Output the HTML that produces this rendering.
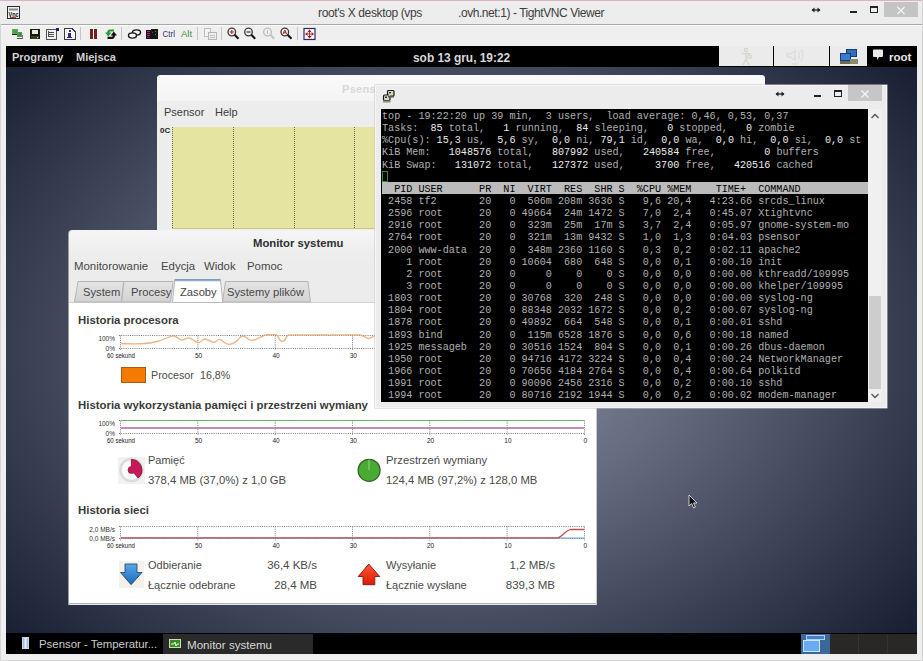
<!DOCTYPE html>
<html><head><meta charset="utf-8">
<style>
*{margin:0;padding:0;box-sizing:border-box}
html,body{width:923px;height:661px;overflow:hidden;background:#efefef;font-family:"Liberation Sans",sans-serif}
.abs{position:absolute}
#title{left:0;top:0;width:923px;height:24px;background:linear-gradient(#efedee,#ececec);border-top:1px solid #d8b4bc}
#title .t{position:absolute;top:5px;font-size:12px;color:#3c3c3c;white-space:pre;letter-spacing:-0.37px}
#toolbar{left:0;top:24px;width:923px;height:22px;background:#efefef;border-top:1px solid #a8a8a8;box-shadow:inset 0 1px 0 #fbfbfb}
#screen{left:6px;top:46px;width:911px;height:608px;overflow:hidden;background:radial-gradient(ellipse 62% 60% at 62% 60%,#5f687b 0%,#474f63 40%,#2c3244 75%,#1d2130 100%)}
#toppanel{left:0;top:0;width:911px;height:21px;background:#000}
#botpanel{left:0;top:587px;width:911px;height:21px;background:#000}
.gn{font-family:"Liberation Sans",sans-serif;white-space:pre;position:absolute}
.term{font-family:"Liberation Mono",monospace;font-size:10.12px;line-height:12px;color:#b0b0b0;white-space:pre;position:absolute}
.term b{color:#ececec;font-weight:normal}
.hdr{background:#bbbbbb;color:#000}
</style></head><body>

<div id="title" class="abs">
<div class="t" style="left:318px">root's X desktop (vps</div>
<div class="t" style="left:458px;letter-spacing:-0.43px">.ovh.net:1) - TightVNC Viewer</div>
<svg class="abs" style="left:6px;top:5px" width="15" height="14"><rect x="1.5" y="0.5" width="12" height="12" fill="#f2f2f2" stroke="#2a2a2a"/><rect x="3" y="2.5" width="9" height="2" fill="#8a8a8a"/><text x="2.5" y="10.5" font-family="Liberation Sans" font-weight="bold" font-size="7" fill="#111" textLength="10" lengthAdjust="spacingAndGlyphs">Vnc</text><rect x="4" y="11" width="6" height="1" fill="#a04050"/></svg>
<svg class="abs" style="left:811px;top:5px" width="10" height="8"><path d="M1 4 H9" stroke="#222" stroke-width="1.3"/><path d="M0.5 4 L3.5 1.5 V6.5 Z M9.5 4 L6.5 1.5 V6.5 Z" fill="#222"/></svg>
<div class="abs" style="left:850px;top:10px;width:7px;height:2px;background:#222"></div>
<div class="abs" style="left:870px;top:5px;width:8px;height:7px;border:1px solid #222;border-top-width:2px"></div>
<div class="abs" style="left:884px;top:1px;width:34px;height:15px;background:#c4c4c4"></div>
<svg class="abs" style="left:896px;top:5px" width="10" height="10"><path d="M1.5 1L8.5 8M8.5 1L1.5 8" stroke="#f8f8f8" stroke-width="1.1"/></svg>
</div>
<div id="toolbar" class="abs"></div>
<svg class="abs" style="left:0;top:0" width="923" height="46" viewBox="0 0 923 46">
<g shape-rendering="crispEdges">
<!-- icon1 green monitors -->
<rect x="12.5" y="29.5" width="5" height="4" fill="#2bb52b" stroke="#7a9a7a" stroke-width="1"/>
<rect x="17.5" y="32.5" width="4" height="4" fill="#22aa22" stroke="#6a8a6a" stroke-width="1"/>
<rect x="12" y="34" width="5" height="1" fill="#222"/>
<rect x="17" y="38" width="6" height="1" fill="#555"/>
<rect x="22" y="35" width="1" height="4" fill="#777"/>
<!-- floppy -->
<rect x="30" y="29" width="10" height="10" fill="#1a1a10"/>
<rect x="32" y="30" width="6" height="4" fill="#e8e8e0"/>
<rect x="31" y="36" width="8" height="3" fill="#3a3a20"/>
<rect x="37" y="37" width="1" height="1" fill="#ccc"/>
<!-- options doc -->
<rect x="46.5" y="29.5" width="10" height="9.5" fill="#f4f4f4" stroke="#505050"/>
<rect x="56" y="28" width="3" height="3" fill="#1c1c6a"/>
<rect x="49" y="32" width="5" height="1" fill="#444"/>
<rect x="49" y="34" width="5" height="1" fill="#555"/>
<rect x="49" y="36" width="5" height="1" fill="#555"/>
<rect x="48" y="31" width="1" height="6" fill="#555"/>
<!-- info doc -->
<path d="M64.5 28.5 H72 L75.5 32 V39.5 H64.5 Z" fill="#f6f6f6" stroke="#3a3a3a"/>
<rect x="69" y="30" width="2" height="2" fill="#2a2a8a"/>
<rect x="68" y="33" width="3" height="4" fill="#2a2a8a"/>
<rect x="67" y="37" width="5" height="1" fill="#2a2a8a"/>
<!-- separators -->
<rect x="80" y="27" width="1" height="13" fill="#c4c4c4"/>
<rect x="121" y="27" width="1" height="13" fill="#c4c4c4"/>
<rect x="197" y="27" width="1" height="13" fill="#c4c4c4"/>
<rect x="221" y="27" width="1" height="13" fill="#c4c4c4"/>
<rect x="297" y="27" width="1" height="13" fill="#c4c4c4"/>
<!-- pause -->
<rect x="90" y="29" width="2.5" height="9.5" fill="#6e2222"/>
<rect x="94" y="29" width="2.5" height="9.5" fill="#6e2222"/>
</g>
<!-- refresh -->
<path d="M114 30.5 H110 Q108.3 30.5 108.3 32.5 V33" stroke="#2a9a2a" stroke-width="2.2" fill="none"/>
<path d="M105 32.5 H111.5 L108.3 36.5 Z" fill="#2a9a2a"/>
<path d="M107.5 37.8 H112 Q113.8 37.8 113.8 35.8 V35" stroke="#111" stroke-width="2.2" fill="none"/>
<path d="M110.6 35.5 H117 L113.8 31.5 Z" fill="#111"/>
<!-- key/chain -->
<ellipse cx="136.5" cy="32.5" rx="4" ry="2.6" fill="#f4f4f4" stroke="#1a1a1a" stroke-width="1.4"/>
<ellipse cx="132.5" cy="35.5" rx="4" ry="2.6" fill="#f4f4f4" stroke="#1a1a1a" stroke-width="1.4"/>
<!-- film -->
<g shape-rendering="crispEdges">
<rect x="146" y="30" width="12" height="9" fill="#161616"/>
<rect x="151" y="29" width="7" height="2" fill="#161616"/>
<rect x="147" y="31" width="3" height="1" fill="#c02090"/>
<rect x="147" y="33" width="3" height="1" fill="#c02090"/>
<rect x="147" y="35" width="3" height="1" fill="#c02090"/>
<rect x="147" y="37" width="3" height="1" fill="#8a1a6a"/>
<rect x="155" y="31" width="1" height="1" fill="#40a040"/>
<rect x="155" y="34" width="1" height="1" fill="#40a040"/>
<rect x="152" y="32" width="1" height="1" fill="#2a6a2a"/>
</g>
<text x="162.5" y="37" font-family="Liberation Sans" font-size="9.6" fill="#35357a" textLength="12.5" lengthAdjust="spacingAndGlyphs">Ctrl</text>
<text x="181" y="37" font-family="Liberation Sans" font-size="9.6" fill="#3b8f3b" textLength="11" lengthAdjust="spacingAndGlyphs">Alt</text>
<!-- copy grayed -->
<g shape-rendering="crispEdges" opacity="0.9">
<rect x="204.5" y="28.5" width="6" height="8" fill="#f4f4f4" stroke="#b8b8b8"/>
<rect x="208.5" y="32.5" width="8" height="7" fill="#ececec" stroke="#b0b0b0"/>
<rect x="210" y="35" width="5" height="1" fill="#c0c0c0"/>
<rect x="210" y="37" width="5" height="1" fill="#c0c0c0"/>
</g>
<!-- zoom icons -->
<g fill="none" stroke-width="1.3">
<circle cx="231.8" cy="32" r="3.8" stroke="#3a3a3a"/>
<path d="M234.6 34.8 L238.5 38.8" stroke="#111" stroke-width="2"/>
<path d="M229.8 32 H233.8 M231.8 30 V34" stroke="#b02020" stroke-width="1.1"/>
<circle cx="248.5" cy="32" r="3.8" stroke="#3a3a3a"/>
<path d="M251.3 34.8 L255.2 38.8" stroke="#111" stroke-width="2"/>
<path d="M246.5 32 H250.5" stroke="#222" stroke-width="1.1"/>
<circle cx="267.5" cy="32" r="3.8" stroke="#bdbdbd"/>
<path d="M270.3 34.8 L274.2 38.8" stroke="#c4c4c4" stroke-width="2"/>
<path d="M267.5 30 V34" stroke="#bbb" stroke-width="1"/>
<circle cx="284.8" cy="32" r="3.8" stroke="#3a3a3a"/>
<path d="M287.6 34.8 L291.5 38.8" stroke="#111" stroke-width="2"/>
<path d="M283 34 L284.8 30 L286.6 34 M283.6 32.8 H286" stroke="#b02020" stroke-width="1"/>
</g>
<!-- fullscreen -->
<rect x="304" y="28.5" width="11" height="11" fill="#fafafa" stroke="#2a2a6a" stroke-width="1.2"/>
<path d="M309.5 29.5 L307.5 32 H311.5 Z M309.5 38.5 L307.5 36 H311.5 Z M305 34 L307.5 32 V36 Z M314 34 L311.5 32 V36 Z" fill="#a01818"/>
<path d="M309.5 32 V36 M307.5 34 H311.5" stroke="#c03030" stroke-width="1"/>
</svg>
<div class="abs" style="left:0;top:24px;width:1px;height:637px;background:#d6d6d6"></div>
<div class="abs" style="left:922px;top:0;width:1px;height:661px;background:#d2d2d2"></div>
<div class="abs" style="left:0;top:660px;width:923px;height:1px;background:#d8d8d8"></div>
<div class="abs" style="left:6px;top:46px;width:911px;height:608px;background:radial-gradient(ellipse 454px 330px at 449px 303px,#8c93a6 0%,#646b7e 50%,#353c4f 100%,#0a0f22 150%)"></div>
<div class="abs" style="left:6px;top:46px;width:911px;height:21px;background:#000"></div>
<div class="gn" style="left:12px;top:51px;font-size:11px;font-weight:bold;color:#d0d0d0">Programy</div>
<div class="gn" style="left:76px;top:51px;font-size:11px;font-weight:bold;color:#d0d0d0">Miejsca</div>
<div class="gn" style="left:413px;top:51px;font-size:11.9px;font-weight:bold;color:#d8d8d8">sob 13 gru, 19:22</div>
<div class="abs" style="left:719px;top:46px;width:54px;height:20px;background:#ebebeb"></div>
<div class="abs" style="left:774px;top:46px;width:55px;height:20px;background:#ebebeb"></div>
<div class="abs" style="left:830px;top:46px;width:37px;height:20px;background:#ebebeb"></div>
<div class="gn" style="left:889px;top:51px;font-size:11.5px;font-weight:bold;color:#e8e8e8">root</div>
<svg class="abs" style="left:872px;top:49px" width="12" height="13"><path d="M1 1.5 Q1 0.5 2 0.5 H10 Q11 0.5 11 1.5 V7 Q11 8 10 8 H7 L5 11 L5 8 H2 Q1 8 1 7 Z" fill="#e8e8e8"/></svg>
<svg class="abs" style="left:719px;top:46px" width="150" height="21">
<g fill="none" stroke="#d4d4cc" stroke-width="1.2"><circle cx="27" cy="4" r="1.6"/><path d="M23 7.5 H31 M27 7 V13 M27 13 L24 19 M27 13 L30 19"/><rect x="29" y="9" width="3" height="3"/></g>
<g fill="none" stroke="#dcdcdc" stroke-width="1.3"><path d="M76 5 V14 L71 11 H68 V8 H71 Z"/><path d="M79 6 Q82 9.5 79 13 M82 4 Q86 9.5 82 15"/><path d="M73 18 H79"/></g>
<rect x="127.5" y="3.5" width="10" height="7" fill="#2f6fc0" stroke="#1a3a70"/><rect x="121.5" y="7.5" width="10" height="7" fill="#3a7ad0" stroke="#1a3a70"/><rect x="121" y="15" width="12" height="3" fill="#6a6a5a"/><rect x="131" y="13" width="8" height="5" fill="#8a8a70"/>
</svg>
<div class="abs" style="left:6px;top:633px;width:911px;height:21px;background:#000"></div>
<div class="abs" style="left:22px;top:637px;width:7px;height:12px;background:linear-gradient(90deg,#8ab0d8,#e8f0ff,#90b8e0);border:1px solid #c8d8e8"></div>
<div class="gn" style="left:39px;top:638px;font-size:11.4px;color:#cccccc">Psensor - Temperatur...</div>
<div class="abs" style="left:163px;top:634px;width:150px;height:20px;background:#2a2a2a"></div>
<div class="abs" style="left:169px;top:639px;width:12px;height:9px;background:#3a8a2a;border:1px solid #c8e0b8"></div>
<svg class="abs" style="left:170px;top:640px" width="10" height="7"><path d="M1 4 H4 L5 2 L6 6 L7 4 H9" stroke="#e0ffd0" stroke-width="1" fill="none"/></svg>
<div class="gn" style="left:187px;top:638px;font-size:11.6px;color:#d8d8d8">Monitor systemu</div>
<div class="abs" style="left:801px;top:634px;width:29px;height:20px;background:#3b6896"></div>
<div class="abs" style="left:806px;top:635px;width:19px;height:5px;border:1px solid #a8d0f8;background:#4a80b8"></div>
<div class="abs" style="left:803px;top:640px;width:17px;height:12px;border:1px solid #c8e4ff;background:#6aaaf0"></div>
<div class="abs" style="left:830px;top:634px;width:87px;height:20px;background:#292826"></div>
<div class="abs" style="left:858px;top:634px;width:1px;height:20px;background:#343330"></div>
<div class="abs" style="left:887px;top:634px;width:1px;height:20px;background:#343330"></div>
<div class="abs" style="left:157px;top:75px;width:608px;height:155px;background:#ededed;border-radius:4px 4px 0 0;overflow:hidden">
<div class="abs" style="left:0;top:0;width:608px;height:26px;background:linear-gradient(#fafafa,#f4f4f4)"></div>
<div class="gn" style="left:185px;top:8px;font-size:11px;font-weight:bold;letter-spacing:0.3px;color:#d8d8d8">Psensor - Temperature Monitor</div>
<div class="gn" style="left:7px;top:31px;font-size:11px;color:#3c3c3c">Psensor</div>
<div class="gn" style="left:58px;top:31px;font-size:11px;color:#3c3c3c">Help</div>
<div class="abs" style="left:15px;top:52px;width:600px;height:102px;background:#e6e4a1;border-bottom:1px solid #c8c68a"></div>
<div class="gn" style="left:3px;top:51px;font-size:8px;font-weight:bold;color:#222">0C</div>
</div>
<svg class="abs" style="left:0;top:0" width="923" height="240"><g stroke="#6e6c50" stroke-width="1" stroke-dasharray="1 1"><line x1="172.5" y1="127" x2="172.5" y2="229" /><line x1="233.5" y1="127" x2="233.5" y2="229" /><line x1="294.5" y1="127" x2="294.5" y2="229" /><line x1="354.5" y1="127" x2="354.5" y2="229" /></g></svg>
<div class="abs" style="left:68px;top:230px;width:529px;height:375px;background:linear-gradient(#f5f5f5,#ececec 30px,#ececec);border-radius:4px 4px 0 0;overflow:hidden;border-left:1px solid #9c9c9c;border-right:1px solid #c8c8c8">
<div class="abs" style="left:0;top:72px;width:529px;height:301px;background:#fff;border-top:1px solid #d0d0d0"></div>
<div class="abs" style="left:0;top:373px;width:529px;height:1px;background:#b4b4b4"></div>
<div class="abs" style="left:0;top:374px;width:529px;height:1px;background:#e6e6e6"></div>
</div>
<div class="gn" style="left:253px;top:237px;font-size:11.3px;font-weight:bold;color:#2e2e2e">Monitor systemu</div>
<div class="gn" style="left:74px;top:260px;font-size:11.4px;color:#464646">Monitorowanie</div>
<div class="gn" style="left:161px;top:260px;font-size:11.4px;color:#464646">Edycja</div>
<div class="gn" style="left:204px;top:260px;font-size:11.4px;color:#464646">Widok</div>
<div class="gn" style="left:247px;top:260px;font-size:11.4px;color:#464646">Pomoc</div>
<svg class="abs" style="left:0;top:0" width="923" height="661">
<defs><linearGradient id="tg" x1="0" y1="0" x2="0" y2="1"><stop offset="0" stop-color="#e4e4e4"/><stop offset="1" stop-color="#d2d2d2"/></linearGradient></defs>
<g stroke="#b4b4b4" stroke-width="1" fill="url(#tg)">
<path d="M74.5 302 L78 281.5 H123.5 L121.5 302 Z"/>
<path d="M121.5 302 L124 281.5 H173 L170.5 302 Z"/>
<path d="M222.5 302 L225.5 281.5 H308 L310.5 302 Z"/>
</g>
<path d="M172.5 302.5 L174.7 279.5 H220.4 L222.9 302.5 Z" fill="#fefefe" stroke="#b8b8b8"/>
<path d="M174.8 280 H220.3" stroke="#5a96d2" stroke-width="1.6"/>
<path d="M175 281.5 H220" stroke="#f0c8a0" stroke-width="0.8" opacity="0.6"/>
</svg>
<div class="gn" style="left:83px;top:286px;font-size:11.2px;color:#464646">System</div>
<div class="gn" style="left:131px;top:286px;font-size:11.2px;color:#464646">Procesy</div>
<div class="gn" style="left:180px;top:286px;font-size:11.2px;color:#464646">Zasoby</div>
<div class="gn" style="left:227px;top:286px;font-size:11.2px;color:#464646">Systemy plików</div>
<div class="gn" style="left:78px;top:314px;font-size:11.4px;font-weight:bold;color:#3a3a3a">Historia procesora</div>
<div class="gn" style="left:78px;top:399px;font-size:11.4px;font-weight:bold;color:#3a3a3a">Historia wykorzystania pamięci i przestrzeni wymiany</div>
<div class="gn" style="left:78px;top:504px;font-size:11.4px;font-weight:bold;color:#3a3a3a">Historia sieci</div>
<svg class="abs" style="left:0;top:0" width="923" height="661">
<g stroke="#444" stroke-width="1" stroke-dasharray="1 1.2" fill="none" opacity="0.7">
<line x1="119" y1="335.5" x2="585" y2="335.5"/><line x1="119" y1="348.5" x2="585" y2="348.5"/>
<line x1="120.5" y1="335.5" x2="120.5" y2="350.5"/>
<line x1="197.8" y1="335.5" x2="197.8" y2="350.5"/>
<line x1="275.2" y1="335.5" x2="275.2" y2="350.5"/>
<line x1="352.5" y1="335.5" x2="352.5" y2="350.5"/>
<line x1="429.8" y1="335.5" x2="429.8" y2="350.5"/>
<line x1="507.1" y1="335.5" x2="507.1" y2="350.5"/>
<line x1="584.5" y1="335.5" x2="584.5" y2="350.5"/>
</g>
<text x="115" y="340.5" text-anchor="end" font-size="6.5" fill="#333" font-family="Liberation Sans">100%</text>
<text x="115" y="351.0" text-anchor="end" font-size="6.5" fill="#333" font-family="Liberation Sans">0%</text>
<text x="107" y="358" font-size="6.5" fill="#222" font-family="Liberation Sans" textLength="28" lengthAdjust="spacingAndGlyphs">60 sekund</text>
<text x="198.6" y="358" text-anchor="middle" font-size="6.5" fill="#222" font-family="Liberation Sans">50</text>
<text x="276.0" y="358" text-anchor="middle" font-size="6.5" fill="#222" font-family="Liberation Sans">40</text>
<text x="353.3" y="358" text-anchor="middle" font-size="6.5" fill="#222" font-family="Liberation Sans">30</text>
<text x="430.6" y="358" text-anchor="middle" font-size="6.5" fill="#222" font-family="Liberation Sans">20</text>
<text x="507.9" y="358" text-anchor="middle" font-size="6.5" fill="#222" font-family="Liberation Sans">10</text>
<text x="585.3" y="358" text-anchor="middle" font-size="6.5" fill="#222" font-family="Liberation Sans">0</text>
<path d="M121 343.5 C132 344.3 142 344 150 343 C158 342 165 339 168 337.5 C170 336.5 172 335.5 174 336 C177 336 179 340.5 182 340 C185 339.5 187 337.5 189.5 338 C193 339 195 342.5 198.5 342.7 C201 342.5 202 339 205 338.8 C208 338.8 211 342.4 214 342.4 C216 342.4 217 339.4 219.5 339.4 C222 339.4 224 344.3 228.5 344.3 C233 344.3 236 342 238 340 C240 337 241.5 336 243 336 C246 336 248 340.4 252 340.4 C255 340.4 257 338.5 260 337.5 C263 336.5 264 334.7 267 334.7 H276 C278 334.7 279 341.4 282.5 341.4 C286 341.4 286 334.8 289 334.8 H328 C329 335.5 330 335.5 331 334.8 H360 C363 335 365 338.4 369 338.4 C372 338.4 374 335 376 335" stroke="#eaa46a" stroke-width="1.3" fill="none" opacity="0.85"/>
<g stroke="#444" stroke-width="1" stroke-dasharray="1 1.2" fill="none" opacity="0.7">
<line x1="119" y1="420.5" x2="585" y2="420.5"/><line x1="119" y1="433.5" x2="585" y2="433.5"/>
<line x1="120.5" y1="420.5" x2="120.5" y2="435.5"/>
<line x1="197.8" y1="420.5" x2="197.8" y2="435.5"/>
<line x1="275.2" y1="420.5" x2="275.2" y2="435.5"/>
<line x1="352.5" y1="420.5" x2="352.5" y2="435.5"/>
<line x1="429.8" y1="420.5" x2="429.8" y2="435.5"/>
<line x1="507.1" y1="420.5" x2="507.1" y2="435.5"/>
<line x1="584.5" y1="420.5" x2="584.5" y2="435.5"/>
</g>
<text x="115" y="425.5" text-anchor="end" font-size="6.5" fill="#333" font-family="Liberation Sans">100%</text>
<text x="115" y="436.0" text-anchor="end" font-size="6.5" fill="#333" font-family="Liberation Sans">0%</text>
<text x="107" y="443" font-size="6.5" fill="#222" font-family="Liberation Sans" textLength="28" lengthAdjust="spacingAndGlyphs">60 sekund</text>
<text x="198.6" y="443" text-anchor="middle" font-size="6.5" fill="#222" font-family="Liberation Sans">50</text>
<text x="276.0" y="443" text-anchor="middle" font-size="6.5" fill="#222" font-family="Liberation Sans">40</text>
<text x="353.3" y="443" text-anchor="middle" font-size="6.5" fill="#222" font-family="Liberation Sans">30</text>
<text x="430.6" y="443" text-anchor="middle" font-size="6.5" fill="#222" font-family="Liberation Sans">20</text>
<text x="507.9" y="443" text-anchor="middle" font-size="6.5" fill="#222" font-family="Liberation Sans">10</text>
<text x="585.3" y="443" text-anchor="middle" font-size="6.5" fill="#222" font-family="Liberation Sans">0</text>
<line x1="121" y1="420.5" x2="584" y2="420.5" stroke="#5aaa50" stroke-width="1" opacity="0.8"/>
<line x1="121" y1="428" x2="584" y2="428" stroke="#b8609c" stroke-width="1.3"/>
<g stroke="#444" stroke-width="1" stroke-dasharray="1 1.2" fill="none" opacity="0.7">
<line x1="119" y1="526.5" x2="585" y2="526.5"/><line x1="119" y1="538.5" x2="585" y2="538.5"/>
<line x1="120.5" y1="526.5" x2="120.5" y2="540.5"/>
<line x1="197.8" y1="526.5" x2="197.8" y2="540.5"/>
<line x1="275.2" y1="526.5" x2="275.2" y2="540.5"/>
<line x1="352.5" y1="526.5" x2="352.5" y2="540.5"/>
<line x1="429.8" y1="526.5" x2="429.8" y2="540.5"/>
<line x1="507.1" y1="526.5" x2="507.1" y2="540.5"/>
<line x1="584.5" y1="526.5" x2="584.5" y2="540.5"/>
</g>
<text x="115" y="531.5" text-anchor="end" font-size="6.5" fill="#333" font-family="Liberation Sans">2,0 MB/s</text>
<text x="115" y="541.0" text-anchor="end" font-size="6.5" fill="#333" font-family="Liberation Sans">0,0 MB/s</text>
<text x="107" y="548" font-size="6.5" fill="#222" font-family="Liberation Sans" textLength="28" lengthAdjust="spacingAndGlyphs">60 sekund</text>
<text x="198.6" y="548" text-anchor="middle" font-size="6.5" fill="#222" font-family="Liberation Sans">50</text>
<text x="276.0" y="548" text-anchor="middle" font-size="6.5" fill="#222" font-family="Liberation Sans">40</text>
<text x="353.3" y="548" text-anchor="middle" font-size="6.5" fill="#222" font-family="Liberation Sans">30</text>
<text x="430.6" y="548" text-anchor="middle" font-size="6.5" fill="#222" font-family="Liberation Sans">20</text>
<text x="507.9" y="548" text-anchor="middle" font-size="6.5" fill="#222" font-family="Liberation Sans">10</text>
<text x="585.3" y="548" text-anchor="middle" font-size="6.5" fill="#222" font-family="Liberation Sans">0</text>
<line x1="121" y1="538" x2="584" y2="538" stroke="#6a9ad0" stroke-width="1"/>
<path d="M121 537.8 H558 C562 537 565 531 570 529.5 H584" stroke="#c05050" stroke-width="1.3" fill="none"/>
<rect x="121.5" y="367.5" width="24" height="15" fill="#f57a00" stroke="#b05810"/>
<rect x="118" y="457" width="27" height="27" fill="#f2f2f2"/>
<circle cx="131.4" cy="470" r="11" fill="#fafafa" stroke="#dcdcdc" stroke-width="2.5"/>
<path d="M131.4 470 L131.4 459.5 A10.5 10.5 0 0 1 138.2 478 Z" fill="#c8185a" stroke="#6a1030" stroke-width="0.8"/><circle cx="131.6" cy="470" r="3.6" fill="#c8185a" stroke="#6a1030" stroke-width="0.6"/><path d="M131.4 470 L131.4 460 A10 10 0 0 1 137.8 477.5 Z" fill="#c8185a"/>
<circle cx="369.1" cy="470.3" r="11" fill="#48ac30" stroke="#3a6030" stroke-width="1.2"/>
<line x1="369" y1="459.5" x2="369" y2="470" stroke="#a8e090" stroke-width="0.8"/>
<rect x="119" y="561" width="25" height="27" fill="#f4f0ec"/>
<defs><linearGradient id="bl" x1="0" y1="0" x2="0" y2="1"><stop offset="0" stop-color="#5aa8e8"/><stop offset="1" stop-color="#1a6ab8"/></linearGradient><linearGradient id="rd" x1="0" y1="0" x2="0" y2="1"><stop offset="0" stop-color="#ff5a30"/><stop offset="1" stop-color="#e01808"/></linearGradient></defs>
<path d="M125 564 H137 V572.5 H142 L131.1 584.7 L120.5 572.5 H125 Z" fill="url(#bl)" stroke="#2a4a70" stroke-width="0.9"/>
<path d="M368.8 564 L379.7 576.5 H374.8 V584.7 H363 V576.5 H358.2 Z" fill="url(#rd)" stroke="#7a1a10" stroke-width="0.9"/>
</svg>
<div class="gn" style="left:151px;top:369px;font-size:10.7px;color:#4a4a4a">Procesor</div>
<div class="gn" style="left:200px;top:369px;font-size:10.7px;color:#4a4a4a">16,8%</div>
<div class="gn" style="left:148px;top:454px;font-size:11px;color:#4a4a4a">Pamięć</div>
<div class="gn" style="left:148px;top:474px;font-size:11.3px;color:#4a4a4a">378,4 MB (37,0%) z 1,0 GB</div>
<div class="gn" style="left:386px;top:454px;font-size:11.3px;color:#4a4a4a">Przestrzeń wymiany</div>
<div class="gn" style="left:386px;top:474px;font-size:11.3px;color:#4a4a4a">124,4 MB (97,2%) z 128,0 MB</div>
<div class="gn" style="left:148px;top:559px;font-size:11px;color:#4a4a4a">Odbieranie</div>
<div class="gn" style="left:148px;top:579px;font-size:11px;color:#4a4a4a">Łącznie odebrane</div>
<div class="gn" style="left:217px;top:559px;width:100px;text-align:right;font-size:11.5px;color:#4a4a4a">36,4 KB/s</div>
<div class="gn" style="left:217px;top:579px;width:100px;text-align:right;font-size:11.5px;color:#4a4a4a">28,4 MB</div>
<div class="gn" style="left:386px;top:559px;font-size:11px;color:#4a4a4a">Wysyłanie</div>
<div class="gn" style="left:386px;top:579px;font-size:11px;color:#4a4a4a">Łącznie wysłane</div>
<div class="gn" style="left:455px;top:559px;width:100px;text-align:right;font-size:11.5px;color:#4a4a4a">1,2 MB/s</div>
<div class="gn" style="left:455px;top:579px;width:100px;text-align:right;font-size:11.5px;color:#4a4a4a">839,3 MB</div>
<div class="abs" style="left:375px;top:85px;width:512px;height:323px;background:#ececec;border:1px solid #f6f6f6;box-shadow:0 0 0 0.5px #c8c8c8"></div>
<div class="abs" style="left:848px;top:85px;width:34px;height:16px;background:#c6c6c6"></div>
<svg class="abs" style="left:860px;top:89px" width="10" height="10"><path d="M1.5 1.5L8.5 8.5M8.5 1.5L1.5 8.5" stroke="#f8f8f8" stroke-width="1.1"/></svg>
<div class="abs" style="left:814px;top:95px;width:7px;height:2px;background:#222"></div>
<div class="abs" style="left:834px;top:90px;width:8px;height:7px;border:1px solid #222;border-top-width:2px"></div>
<svg class="abs" style="left:775px;top:90px" width="10" height="8"><path d="M1 4 H9" stroke="#222" stroke-width="1.3"/><path d="M0.5 4 L3.5 1.5 V6.5 Z M9.5 4 L6.5 1.5 V6.5 Z" fill="#222"/></svg>
<svg class="abs" style="left:382px;top:89px" width="15" height="15">
<rect x="5.5" y="1.5" width="6.5" height="5.5" rx="1" fill="#d4d8c4" stroke="#1a1a1a" stroke-width="1.2"/><rect x="7" y="3" width="2" height="1.5" fill="#333"/>
<rect x="1.5" y="6" width="6.5" height="5.5" rx="1" fill="#d4d8c4" stroke="#1a1a1a" stroke-width="1.2"/><rect x="3" y="7.5" width="2" height="1.5" fill="#333"/>
<rect x="1" y="11.5" width="7.5" height="2" fill="#8a8a8a"/><rect x="6" y="7" width="6" height="1.5" fill="#555"/>
<path d="M7 6.5 L9 5" stroke="#e8f0b0" stroke-width="1.5"/>
</svg>
<div class="abs" style="left:381px;top:109px;width:487px;height:293px;background:#000"></div>
<div class="abs" style="left:868px;top:109px;width:14px;height:293px;background:#f0f0f0"></div>
<div class="abs" style="left:869px;top:296px;width:12px;height:93px;background:#cdcdcd"></div>
<svg class="abs" style="left:868px;top:109px" width="14" height="293"><path d="M3.5 9 L7 5.5 L10.5 9" stroke="#555" stroke-width="1.3" fill="none"/><path d="M3.5 285 L7 288.5 L10.5 285" stroke="#555" stroke-width="1.3" fill="none"/></svg>
<div class="term" style="left:382px;top:111.0px">top - 19:22:20 up 39 min,  3 users,  load average: 0,46, 0,53, 0,37</div>
<div class="term" style="left:382px;top:123.14px">Tasks:  <b>85</b> total,   <b>1</b> running,  <b>84</b> sleeping,   <b>0</b> stopped,   <b>0</b> zombie</div>
<div class="term" style="left:382px;top:135.28px">%Cpu(s): <b>15,3</b> us,  <b>5,6</b> sy,  <b>0,0</b> ni, <b>79,1</b> id,  <b>0,0</b> wa,  <b>0,0</b> hi,  <b>0,0</b> si,  <b>0,0</b> st</div>
<div class="term" style="left:382px;top:147.42px">KiB Mem:   <b>1048576</b> total,   <b>807992</b> used,   <b>240584</b> free,        <b>0</b> buffers</div>
<div class="term" style="left:382px;top:159.56px">KiB Swap:   <b>131072</b> total,   <b>127372</b> used,     <b>3700</b> free,   <b>420516</b> cached</div>
<div class="term" style="left:382px;top:171.7px"></div>
<div class="abs" style="left:382px;top:182px;width:486px;height:12px;background:#bbbbbb"></div>
<div class="term" style="left:382px;top:183.84px;color:#000">  PID USER      PR  NI  VIRT  RES  SHR S  %CPU %MEM    TIME+  COMMAND</div>
<div class="term" style="left:382px;top:195.98px"> 2458 tf2       20   0  506m 208m 3636 S   9,6 20,4   4:23.66 srcds_linux</div>
<div class="term" style="left:382px;top:208.12px"> 2596 root      20   0 49664  24m 1472 S   7,0  2,4   0:45.07 Xtightvnc</div>
<div class="term" style="left:382px;top:220.26px"> 2916 root      20   0  323m  25m  17m S   3,7  2,4   0:05.97 gnome-system-mo</div>
<div class="term" style="left:382px;top:232.4px"> 2764 root      20   0  321m  13m 9432 S   1,0  1,3   0:04.03 psensor</div>
<div class="term" style="left:382px;top:244.54px"> 2000 www-data  20   0  348m 2360 1160 S   0,3  0,2   0:02.11 apache2</div>
<div class="term" style="left:382px;top:256.68px">    1 root      20   0 10604  680  648 S   0,0  0,1   0:00.10 init</div>
<div class="term" style="left:382px;top:268.82px">    2 root      20   0     0    0    0 S   0,0  0,0   0:00.00 kthreadd/109995</div>
<div class="term" style="left:382px;top:280.96px">    3 root      20   0     0    0    0 S   0,0  0,0   0:00.00 khelper/109995</div>
<div class="term" style="left:382px;top:293.1px"> 1803 root      20   0 30768  320  248 S   0,0  0,0   0:00.00 syslog-ng</div>
<div class="term" style="left:382px;top:305.24px"> 1804 root      20   0 88348 2032 1672 S   0,0  0,2   0:00.07 syslog-ng</div>
<div class="term" style="left:382px;top:317.38px"> 1878 root      20   0 49892  664  548 S   0,0  0,1   0:00.01 sshd</div>
<div class="term" style="left:382px;top:329.52px"> 1893 bind      20   0  115m 6528 1876 S   0,0  0,6   0:00.18 named</div>
<div class="term" style="left:382px;top:341.66px"> 1925 messageb  20   0 30516 1524  804 S   0,0  0,1   0:00.26 dbus-daemon</div>
<div class="term" style="left:382px;top:353.8px"> 1950 root      20   0 94716 4172 3224 S   0,0  0,4   0:00.24 NetworkManager</div>
<div class="term" style="left:382px;top:365.94px"> 1966 root      20   0 70656 4184 2764 S   0,0  0,4   0:00.64 polkitd</div>
<div class="term" style="left:382px;top:378.08px"> 1991 root      20   0 90096 2456 2316 S   0,0  0,2   0:00.10 sshd</div>
<div class="term" style="left:382px;top:390.22px"> 1994 root      20   0 80716 2192 1944 S   0,0  0,2   0:00.02 modem-manager</div>
<div class="abs" style="left:382px;top:171px;width:6px;height:11px;border:1px solid #2f8a2f"></div>
<svg class="abs" style="left:688px;top:494px" width="12" height="16"><path d="M1 1 V12 L3.6 9.6 L5.6 14 L7.4 13.2 L5.5 9 H9 Z" fill="#111" stroke="#eee" stroke-width="0.8"/></svg>
</body></html>
